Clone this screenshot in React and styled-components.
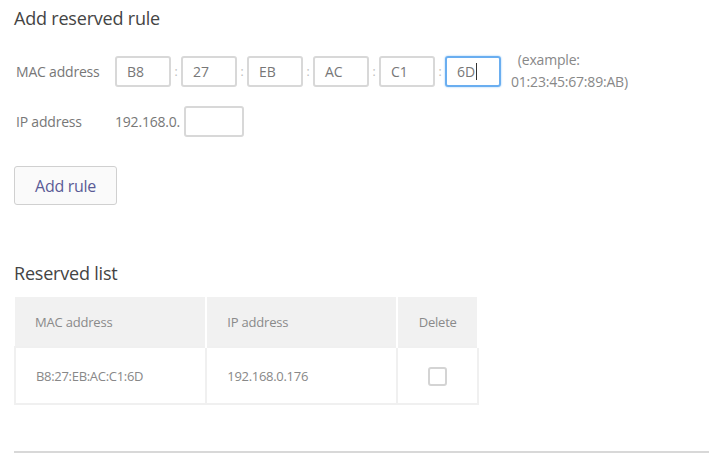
import React from "react";
import styled, { createGlobalStyle } from "styled-components";

const Global = createGlobalStyle`
  html, body { margin: 0; padding: 0; background: #fff; }
  body { font-family: "Open Sans", "Noto Sans", sans-serif; color: #666; }
`;

const Page = styled.div`
  padding: 0 4px 0 14px;
  width: 695px;
`;

const Heading = styled.h2`
  margin: ${(p) => p.$top}px 0 0 0;
  font-size: 18px;
  font-weight: 400;
  line-height: 24px;
  color: #444;
  letter-spacing: -0.2px;
`;

const FormRow = styled.div`
  display: flex;
  align-items: center;
  margin-top: ${(p) => p.$top}px;
`;

const Label = styled.label`
  width: 99px;
  padding-left: 2px;
  font-size: 14px;
  font-weight: 400;
  color: #777;
  letter-spacing: -0.2px;
`;

const Octet = styled.div`
  height: 27px;
  border: 2px solid ${(p) => (p.$focus ? "#6aaef0" : "#d8d8d8")};
  box-shadow: ${(p) => (p.$focus ? "0 0 2px #8cc4f5" : "none")};
  border-radius: 3px;
  display: flex;
  align-items: center;
  padding-left: 10px;
  box-sizing: content-box;
  width: ${(p) => p.$w || 42}px;
  font-size: 14px;
  color: #777;
`;

const Caret = styled.span`
  display: inline-block;
  width: 1px;
  height: 17px;
  background: #333;
  margin-left: 1px;
`;

const Sep = styled.span`
  width: 10px;
  text-align: center;
  font-size: 12px;
  color: #bbb;
`;

const Example = styled.span`
  margin-left: 10px;
  width: 135px;
  font-size: 14px;
  line-height: 22px;
  color: #888;
  letter-spacing: -0.2px;
`;

const Prefix = styled.span`
  font-size: 14px;
  color: #777;
  margin-right: 4px;
  letter-spacing: -0.2px;
`;

const Button = styled.button`
  margin-top: 29px;
  width: 103px;
  height: 39px;
  border: 1px solid #d0d0d0;
  border-radius: 3px;
  background: #fafafa;
  font-family: inherit;
  font-size: 16px;
  color: #5a5a96;
  letter-spacing: -0.3px;
  display: block;
`;

const Table = styled.table`
  margin-top: 12px;
  border-collapse: collapse;
  width: 465px;
  font-size: 13px;
`;

const Th = styled.th`
  background: #f1f1f1;
  height: 50px;
  padding: 0 0 0 ${(p) => (p.$center ? 0 : 20)}px;
  text-align: ${(p) => (p.$center ? "center" : "left")};
  font-weight: 400;
  color: #8a8a8a;
  border-right: 2px solid #fff;
  width: ${(p) => p.$w}px;
  box-sizing: border-box;
  letter-spacing: -0.2px;
`;

const Td = styled.td`
  height: 55px;
  padding: 0 0 0 ${(p) => (p.$center ? 0 : 20)}px;
  text-align: ${(p) => (p.$center ? "center" : "left")};
  color: #888;
  border: 2px solid #f0f0f0;
  letter-spacing: -0.3px;
`;

const Check = styled.span`
  display: inline-block;
  width: 15px;
  height: 15px;
  border: 2px solid #d4d4d4;
  border-radius: 3px;
  vertical-align: middle;
`;

const Rule = styled.hr`
  margin: 46px 0 0 0;
  border: none;
  border-top: 2px solid #d8d8d8;
`;

const mac = ["B8", "27", "EB", "AC", "C1", "6D"];

export default function App() {
  return (
    <>
      <Global />
      <Page>
        <Heading $top={6}>Add reserved rule</Heading>
        <FormRow $top={19}>
          <Label>MAC address</Label>
          {mac.map((m, i) => (
            <React.Fragment key={m}>
              {i > 0 && <Sep>:</Sep>}
              <Octet $focus={i === 5}>
                {m}
                {i === 5 && <Caret />}
              </Octet>
            </React.Fragment>
          ))}
          <Example>&nbsp;&nbsp;(example: 01:23:45:67:89:AB)</Example>
        </FormRow>
        <FormRow $top={13}>
          <Label>IP address</Label>
          <Prefix>192.168.0.</Prefix>
          <Octet $w={46} />
        </FormRow>
        <Button>Add rule</Button>
        <Heading $top={56}>Reserved list</Heading>
        <Table>
          <thead>
            <tr>
              <Th $w={192}>MAC address</Th>
              <Th $w={192}>IP address</Th>
              <Th $w={81} $center>Delete</Th>
            </tr>
          </thead>
          <tbody>
            <tr>
              <Td>B8:27:EB:AC:C1:6D</Td>
              <Td>192.168.0.176</Td>
              <Td $center>
                <Check />
              </Td>
            </tr>
          </tbody>
        </Table>
        <Rule />
      </Page>
    </>
  );
}
